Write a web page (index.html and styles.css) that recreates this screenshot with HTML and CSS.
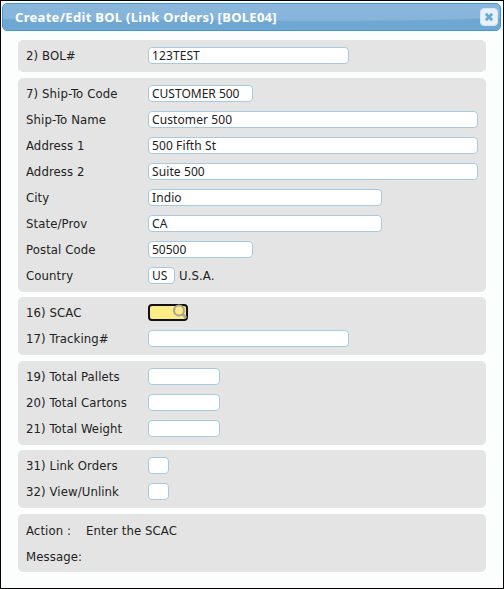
FILE: index.html
```
<!DOCTYPE html>
<html lang="en">

<head>
    <meta charset="UTF-8">
    <title>Create/Edit BOL</title>
    <meta name="viewport" content="width=device-width, initial-scale=1.0">
    <link rel="stylesheet" href="styles.css">
</head>

<body>
    <div class="dialog">
        <div class="titlebar">
            <svg class="gloss" viewBox="0 0 497 26" preserveAspectRatio="none">
                <path d="M0 15 Q100 18 180 15 Q320 20 497 14 V26 H0 Z" fill="#6fa7d3" />
            </svg>
            <h1>Create/Edit BOL (Link Orders) [BOLE04]</h1>
            <button type="button" class="close-btn" aria-label="Close">
                <svg width="16" height="16" viewBox="0 0 16 16">
                    <path d="M4.8 4.8 L11.2 11.2 M11.2 4.8 L4.8 11.2" stroke="#6da8d5" stroke-width="2.8" />
                </svg>
            </button>
        </div>
        <form class="content">
            <div class="panel">
                <div class="row">
                    <label for="bol">2) BOL#</label>
                    <input type="text" id="bol" class="w-medium" value="123TEST">
                </div>
            </div>
            <div class="panel">
                <div class="row">
                    <label for="code">7) Ship-To Code</label>
                    <input type="text" id="code" class="w-code" value="CUSTOMER 500">
                </div>
                <div class="row">
                    <label for="name">Ship-To Name</label>
                    <input type="text" id="name" class="w-full" value="Customer 500">
                </div>
                <div class="row">
                    <label for="address1">Address 1</label>
                    <input type="text" id="address1" class="w-full" value="500 Fifth St">
                </div>
                <div class="row">
                    <label for="address2">Address 2</label>
                    <input type="text" id="address2" class="w-full" value="Suite 500">
                </div>
                <div class="row">
                    <label for="city">City</label>
                    <input type="text" id="city" class="w-city" value="Indio">
                </div>
                <div class="row">
                    <label for="state">State/Prov</label>
                    <input type="text" id="state" class="w-city" value="CA">
                </div>
                <div class="row">
                    <label for="postal">Postal Code</label>
                    <input type="text" id="postal" class="w-code" value="50500">
                </div>
                <div class="row">
                    <label for="country">Country</label>
                    <input type="text" id="country" class="w-country" value="US">
                    <span class="country-name">U.S.A.</span>
                </div>
            </div>
            <div class="panel short-gap">
                <div class="row">
                    <label for="scac">16) SCAC</label>
                    <div class="lookup">
                        <input type="text" id="scac" class="w-scac active">
                        <svg class="search-icon" width="16" height="16" viewBox="0 0 16 16">
                            <circle cx="7" cy="6.5" r="5" fill="none" stroke="#aaa697" stroke-width="2.2" />
                            <path d="M10.5 10 L14.3 14" stroke="#aaa697" stroke-width="2.6" />
                        </svg>
                    </div>
                </div>
                <div class="row">
                    <label for="tracking">17) Tracking#</label>
                    <input type="text" id="tracking" class="w-medium">
                </div>
            </div>
            <div class="panel">
                <div class="row">
                    <label for="pallets">19) Total Pallets</label>
                    <input type="text" id="pallets" class="w-total">
                </div>
                <div class="row">
                    <label for="cartons">20) Total Cartons</label>
                    <input type="text" id="cartons" class="w-total">
                </div>
                <div class="row">
                    <label for="weight">21) Total Weight</label>
                    <input type="text" id="weight" class="w-total">
                </div>
            </div>
            <div class="panel short-gap">
                <div class="row">
                    <label for="link">31) Link Orders</label>
                    <input type="text" id="link" class="w-flag">
                </div>
                <div class="row">
                    <label for="view">32) View/Unlink</label>
                    <input type="text" id="view" class="w-flag">
                </div>
            </div>
            <div class="panel">
                <div class="row status">
                    <span class="status-label">Action :</span>
                    <span>Enter the SCAC</span>
                </div>
                <div class="row status">
                    <span class="status-label">Message:</span>
                </div>
            </div>
        </form>
    </div>
</body>

</html>
```

FILE: styles.css
```
* {
    box-sizing: border-box;
}

body {
    margin: 0;
    font-family: "DejaVu Sans Condensed", "DejaVu Sans", sans-serif;
    font-size: 13px;
    letter-spacing: 0.1px;
    color: #222;
}

.dialog {
    height: 589px;
    border: 1px solid #000;
    padding: 2px 2px 0 1px;
    background: #fcfdfd;
}

.titlebar {
    position: relative;
    display: flex;
    justify-content: space-between;
    align-items: center;
    height: 28px;
    padding: 0 2px 0 12px;
    border: 1px solid #4297d7;
    border-radius: 5px;
    background: linear-gradient(#8ab7dc, #82b2d9);
    overflow: hidden;
}

.gloss {
    position: absolute;
    left: 0;
    top: 0;
    width: 100%;
    height: 100%;
}

.titlebar h1 {
    position: relative;
    margin: 0;
    font-family: "Noto Sans", sans-serif;
    font-size: 13px;
    font-weight: bold;
    line-height: 26px;
    letter-spacing: 0.3px;
    color: #fff;
}

.close-btn {
    position: relative;
    width: 18px;
    height: 18px;
    padding: 0;
    border: 1px solid #d5e6f4;
    border-radius: 4px;
    background: #e6f1fa;
}

.close-btn svg {
    display: block;
}

.content {
    padding: 9px 15px 0 16px;
}

.panel {
    margin-bottom: 6px;
    padding: 3px 8px;
    border-radius: 5px;
    background: #e4e4e4;
}

.panel.short-gap {
    margin-top: -1px;
}

.row {
    display: flex;
    align-items: flex-start;
    height: 26px;
    padding-top: 4px;
    line-height: 17px;
}

.row label {
    width: 122px;
    flex: none;
}

input {
    height: 17px;
    padding: 0 3px;
    border: 1px solid #a6c9e2;
    border-radius: 4px;
    background: #fff;
    font-family: "Noto Sans", sans-serif;
    font-size: 12px;
    letter-spacing: 0.1px;
    color: #222;
}

.w-medium {
    width: 201px;
}

.w-code {
    width: 105px;
    letter-spacing: 0;
}

.w-full {
    width: 330px;
}

.w-city {
    width: 234px;
}

.w-country {
    width: 27px;
}

.w-scac {
    width: 40px;
}

.w-total {
    width: 72px;
}

.w-flag {
    width: 21px;
}

.country-name {
    margin-left: 4px;
}

.lookup {
    position: relative;
    display: flex;
}

input.active {
    border: 2px solid #101010;
    background: #fbec88;
}

.search-icon {
    position: absolute;
    top: 0;
    right: 0;
}

.row.status {
    padding-top: 5px;
}

.status-label {
    width: 60px;
}
```
